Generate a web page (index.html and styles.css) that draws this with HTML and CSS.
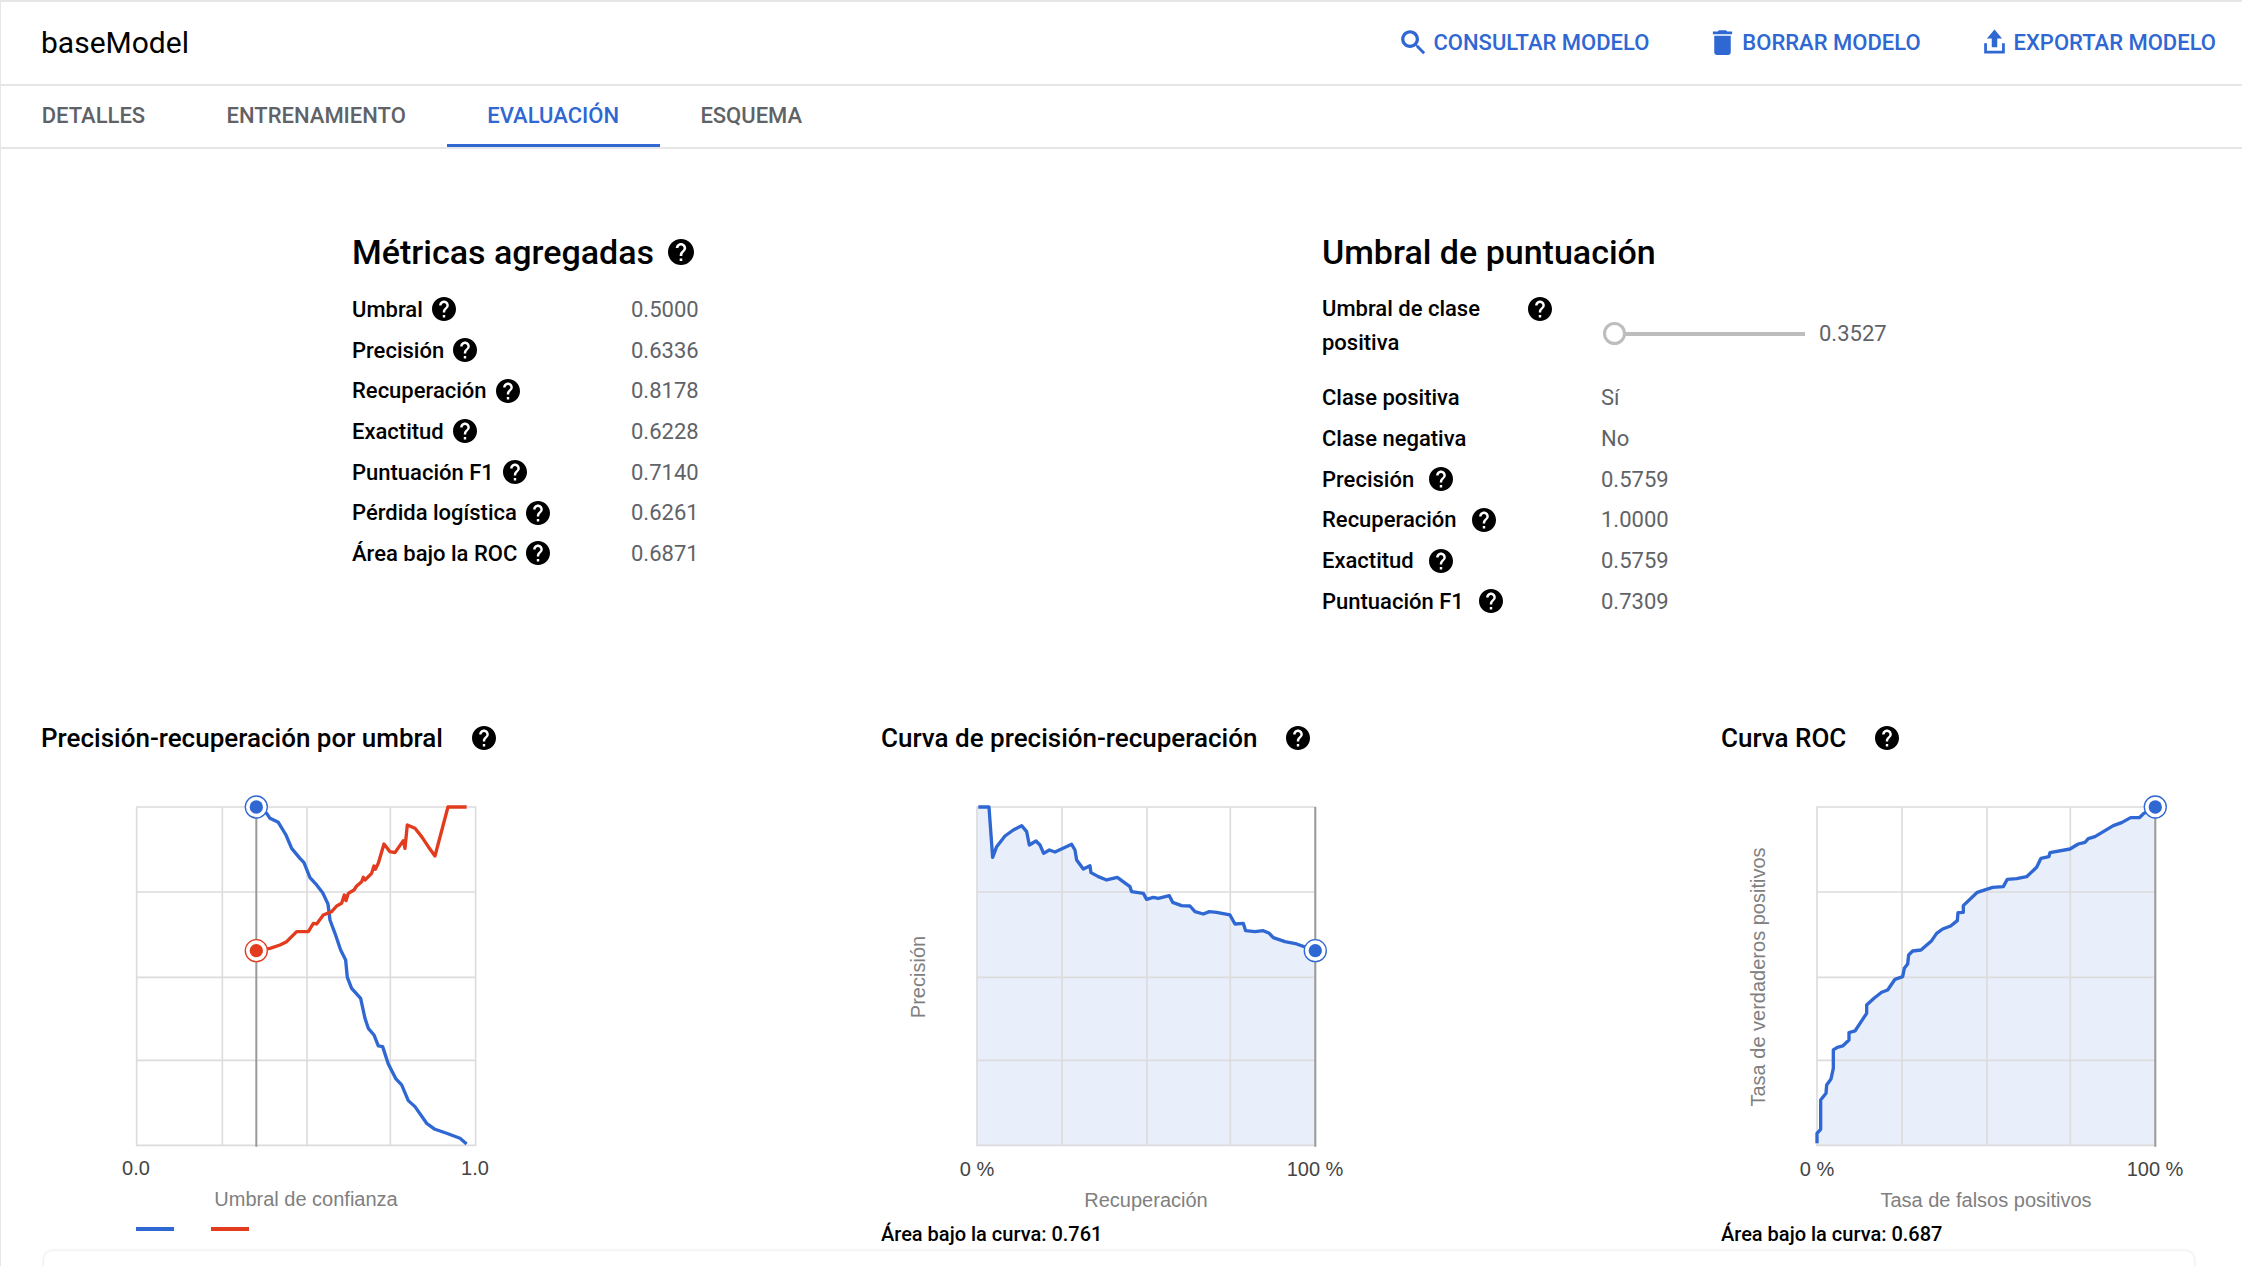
FILE: index.html
```html
<!DOCTYPE html>
<html lang="es">
<head>
    <meta charset="UTF-8">
    <title>baseModel</title>
    <link rel="stylesheet" href="styles.css">
</head>
<body>

    <svg class="defs">
        <symbol id="help" viewBox="2 2 20 20"><path d="M12 2C6.48 2 2 6.48 2 12s4.48 10 10 10 10-4.48 10-10S17.52 2 12 2zm1 17h-2v-2h2v2zm2.07-7.75l-.9.92C13.45 12.9 13 13.5 13 15h-2v-.5c0-1.1.45-2.1 1.17-2.83l1.24-1.26c.37-.36.59-.86.59-1.41 0-1.1-.9-2-2-2s-2 .9-2 2H8c0-2.21 1.79-4 4-4s4 1.79 4 4c0 .88-.36 1.68-.93 2.25z"/></symbol>
        <g id="grid">
            <path class="grid" d="M291 81H1306V1096H291ZM546 81V1096M801 81V1096M1051 81V1096M291 336H1306M291 592H1306M291 841H1306"/>
        </g>
    </svg>

    <div class="page">
        <header class="topbar">
            <h1 class="model-name">baseModel</h1>
            <div class="actions">
                <a class="action">
                    <svg viewBox="0 0 24 24"><path d="M15.500 14h-.79l-.28-.27C15.41 12.59 16 11.11 16 9.500 16 5.910 13.090 3 9.500 3S3 5.910 3 9.500 5.910 16 9.500 16c1.610 0 3.090-.59 4.230-1.570l.27.28v.79l5 4.990L20.490 19l-4.990-5zm-6-.4C7.200 13.600 5.400 11.800 5.400 9.500S7.200 5.400 9.500 5.400 13.600 7.200 13.600 9.500 11.800 13.600 9.500 13.600z"/></svg>
                    Consultar modelo
                </a>
                <a class="action">
                    <svg viewBox="0 0 24 24"><path d="M6 19c0 1.100.9 2 2 2h8c1.100 0 2-.9 2-2V7H6v12zM19 4h-3.500l-1-1h-5l-1 1H5v2h14V4z"/></svg>
                    Borrar modelo
                </a>
                <a class="action">
                    <svg viewBox="0 0 24 24"><path d="M12 2.500L6.500 9H10v6.500h4V9h3.500zM4.500 12.500V20h15v-7.500h-2V18h-11v-5.500z"/></svg>
                    Exportar modelo
                </a>
            </div>
        </header>

        <nav class="tabs">
            <a class="tab">Detalles</a>
            <a class="tab">Entrenamiento</a>
            <a class="tab active">Evaluación</a>
            <a class="tab">Esquema</a>
        </nav>

        <section class="metrics">
            <div class="metrics-col aggregate">
                <h2 class="section-title">Métricas agregadas <svg class="help big"><use href="#help"/></svg></h2>
                <div class="row"><div class="label">Umbral <svg class="help"><use href="#help"/></svg></div><div class="value">0.5000</div></div>
                <div class="row"><div class="label">Precisión <svg class="help"><use href="#help"/></svg></div><div class="value">0.6336</div></div>
                <div class="row"><div class="label">Recuperación <svg class="help"><use href="#help"/></svg></div><div class="value">0.8178</div></div>
                <div class="row"><div class="label">Exactitud <svg class="help"><use href="#help"/></svg></div><div class="value">0.6228</div></div>
                <div class="row"><div class="label">Puntuación F1 <svg class="help"><use href="#help"/></svg></div><div class="value">0.7140</div></div>
                <div class="row"><div class="label">Pérdida logística <svg class="help"><use href="#help"/></svg></div><div class="value">0.6261</div></div>
                <div class="row"><div class="label">Área bajo la ROC <svg class="help"><use href="#help"/></svg></div><div class="value">0.6871</div></div>
            </div>

            <div class="metrics-col threshold">
                <h2 class="section-title">Umbral de puntuación</h2>
                <div class="row slider-row">
                    <div class="label"><span class="wrap">Umbral de clase positiva</span><svg class="help"><use href="#help"/></svg></div>
                    <div class="value slider-value">
                        <span class="slider"><span class="thumb"></span></span>
                        0.3527
                    </div>
                </div>
                <div class="row"><div class="label">Clase positiva</div><div class="value">Sí</div></div>
                <div class="row"><div class="label">Clase negativa</div><div class="value">No</div></div>
                <div class="row"><div class="label">Precisión <svg class="help"><use href="#help"/></svg></div><div class="value">0.5759</div></div>
                <div class="row"><div class="label">Recuperación <svg class="help"><use href="#help"/></svg></div><div class="value">1.0000</div></div>
                <div class="row"><div class="label">Exactitud <svg class="help"><use href="#help"/></svg></div><div class="value">0.5759</div></div>
                <div class="row"><div class="label">Puntuación F1 <svg class="help"><use href="#help"/></svg></div><div class="value">0.7309</div></div>
            </div>
        </section>

        <section class="charts">
            <div class="chart-col">
                <h3 class="chart-title">Precisión-recuperación por umbral <svg class="help"><use href="#help"/></svg></h3>
                <svg class="chart" width="840" height="470">
                    <g transform="translate(59 0) scale(.3333)">
                        <path class="grid" d="M110 81H1127V1096H110ZM367 81V1096M621 81V1096M871 81V1096M110 336H1127M110 592H1127M110 841H1127"/>
                        <path class="cursor" d="M469 81V1100"/>
                        <polyline class="line blue" points="469,81 500,100 510,115 535,127 558,165 575,205 600,235 612,248 630,293 650,315 668,338 684,372 690,420 705,460 722,510 737,540 742,592 755,625 782,655 795,715 805,745 822,765 835,798 848,800 865,852 888,897 905,915 925,962 945,980 980,1030 1005,1048 1040,1060 1080,1075 1100,1092"/>
                        <polyline class="line red" points="469,512 510,505 540,495 560,485 590,455 625,455 640,430 650,432 670,405 695,395 710,378 725,370 733,345 738,362 745,340 762,330 770,318 785,305 790,292 795,300 815,280 822,258 826,268 835,250 852,192 870,215 885,218 910,182 915,205 922,135 945,145 965,170 985,200 1005,228 1044,81 1100,81"/>
                        <circle class="ring blue-ring" cx="469" cy="81" r="33"/>
                        <circle class="dot blue-dot" cx="469" cy="81" r="20"/>
                        <circle class="ring red-ring" cx="469" cy="512" r="33"/>
                        <circle class="dot red-dot" cx="469" cy="512" r="20"/>
                    </g>
                    <text class="tick" x="95" y="395" text-anchor="middle">0.0</text>
                    <text class="tick" x="434" y="395" text-anchor="middle">1.0</text>
                    <text class="axis-title" x="265" y="426" text-anchor="middle">Umbral de confianza</text>
                    <path class="legend blue-key" d="M95 449H133"/>
                    <path class="legend red-key" d="M170 449H208"/>
                </svg>
            </div>

            <div class="chart-col">
                <h3 class="chart-title">Curva de precisión-recuperación <svg class="help"><use href="#help"/></svg></h3>
                <svg class="chart short" width="840" height="436">
                    <g transform="translate(-1 0) scale(.3333)">
                        <polygon class="area" points="295,81 327,81 338,232 350,200 375,168 400,150 425,137 440,155 448,195 468,183 480,195 491,220 508,210 525,216 575,193 585,210 590,240 610,267 630,257 633,278 655,290 680,300 712,292 750,320 755,335 790,340 800,358 820,352 835,355 868,347 878,367 905,377 930,378 945,395 970,402 988,395 1010,397 1050,405 1065,432 1090,430 1097,452 1125,455 1150,452 1168,460 1180,473 1215,485 1250,492 1306,512 1306,1096 291,1096 291,81"/>
                        <use href="#grid"/>
                        <path class="cursor" d="M1306 81V1100"/>
                        <polyline class="line blue" points="295,81 327,81 338,232 350,200 375,168 400,150 425,137 440,155 448,195 468,183 480,195 491,220 508,210 525,216 575,193 585,210 590,240 610,267 630,257 633,278 655,290 680,300 712,292 750,320 755,335 790,340 800,358 820,352 835,355 868,347 878,367 905,377 930,378 945,395 970,402 988,395 1010,397 1050,405 1065,432 1090,430 1097,452 1125,455 1150,452 1168,460 1180,473 1215,485 1250,492 1306,512"/>
                        <circle class="ring blue-ring" cx="1306" cy="512" r="33"/>
                        <circle class="dot blue-dot" cx="1306" cy="512" r="20"/>
                    </g>
                    <text class="tick" x="96" y="396" text-anchor="middle">0 %</text>
                    <text class="tick" x="434" y="396" text-anchor="middle">100 %</text>
                    <text class="axis-title" x="265" y="427" text-anchor="middle">Recuperación</text>
                    <text class="axis-title" transform="translate(44 197) rotate(-90)" text-anchor="middle">Precisión</text>
                </svg>
                <p class="auc">Área bajo la curva: 0.761</p>
            </div>

            <div class="chart-col">
                <h3 class="chart-title">Curva ROC <svg class="help"><use href="#help"/></svg></h3>
                <svg class="chart short" width="840" height="436">
                    <g transform="translate(-1 0) scale(.3333)">
                        <polygon class="area" points="291,1090 291,1060 302,1048 302,960 318,940 320,915 333,897 340,865 340,810 352,802 368,798 387,780 387,758 405,753 420,730 440,700 440,675 462,655 485,637 503,630 525,598 548,590 553,565 563,552 566,525 578,513 603,510 635,482 650,460 668,447 692,438 712,422 714,398 730,397 730,377 772,337 818,322 850,320 862,298 890,296 920,290 950,262 963,235 987,230 990,218 1050,207 1075,192 1095,187 1105,176 1125,170 1180,137 1205,128 1232,113 1258,113 1272,100 1306,81 1306,1096 291,1096"/>
                        <use href="#grid"/>
                        <path class="cursor" d="M1306 81V1100"/>
                        <polyline class="line blue" points="291,1090 291,1060 302,1048 302,960 318,940 320,915 333,897 340,865 340,810 352,802 368,798 387,780 387,758 405,753 420,730 440,700 440,675 462,655 485,637 503,630 525,598 548,590 553,565 563,552 566,525 578,513 603,510 635,482 650,460 668,447 692,438 712,422 714,398 730,397 730,377 772,337 818,322 850,320 862,298 890,296 920,290 950,262 963,235 987,230 990,218 1050,207 1075,192 1095,187 1105,176 1125,170 1180,137 1205,128 1232,113 1258,113 1272,100 1306,81"/>
                        <circle class="ring blue-ring" cx="1306" cy="81" r="33"/>
                        <circle class="dot blue-dot" cx="1306" cy="81" r="20"/>
                    </g>
                    <text class="tick" x="96" y="396" text-anchor="middle">0 %</text>
                    <text class="tick" x="434" y="396" text-anchor="middle">100 %</text>
                    <text class="axis-title" x="265" y="427" text-anchor="middle">Tasa de falsos positivos</text>
                    <text class="axis-title" transform="translate(44 197) rotate(-90)" text-anchor="middle">Tasa de verdaderos positivos</text>
                </svg>
                <p class="auc">Área bajo la curva: 0.687</p>
            </div>
        </section>

        <div class="bottom-card"></div>
    </div>

</body>
</html>
```
FILE: styles.css
```css
/* General */
html, body {
    margin: 0;
    height: 100%;
    overflow: hidden;
    background: #fff;
}

body {
    font-family: Roboto, sans-serif;
    color: #000;
}

.defs {
    position: absolute;
    width: 0;
    height: 0;
}

.page {
    height: 1266px;
    box-sizing: border-box;
    border-top: 2px solid #e6e6e6;
    border-left: 1px solid #e6e6e6;
    overflow: hidden;
}

.help {
    width: 24px;
    height: 24px;
    fill: #000;
    flex: none;
}

/* Header */
.topbar {
    height: 82px;
    box-sizing: content-box;
    display: flex;
    align-items: center;
    justify-content: space-between;
    padding: 0 26px 0 40px;
    border-bottom: 2px solid #e6e6e6;
}

.model-name {
    margin: 0 0 2px;
    font-size: 30px;
    font-weight: 400;
}

.actions {
    display: flex;
    gap: 57px;
    margin-bottom: 2px;
}

.action {
    display: flex;
    align-items: center;
    gap: 3px;
    color: #2f67d3;
    font-size: 22px;
    font-weight: 500;
    text-transform: uppercase;
}

.action svg {
    width: 33px;
    height: 33px;
    fill: #2f67d3;
}

/* Tabs */
.tabs {
    height: 61px;
    display: flex;
    border-bottom: 2px solid #e6e6e6;
}

.tab {
    padding: 0 40.7px;
    line-height: 60px;
    font-size: 22px;
    font-weight: 500;
    color: #5f6368;
    text-transform: uppercase;
    box-sizing: border-box;
    height: 61px;
    border-bottom: 3px solid transparent;
}

.tab.active {
    color: #2f67d3;
    border-bottom-color: #2f67d3;
}

/* Metrics */
.metrics {
    display: flex;
    height: 568px;
    padding: 83px 0 0 351px;
    box-sizing: border-box;
}

.metrics-col {
    flex: none;
    width: 970px;
    font-size: 22px;
}

.section-title {
    margin: 0 0 17px;
    height: 40px;
    display: flex;
    align-items: center;
    gap: 14px;
    font-size: 34px;
    font-weight: 500;
}

.help.big {
    width: 26px;
    height: 26px;
}

.row {
    display: flex;
    height: 40.7px;
    align-items: center;
}

.label {
    display: flex;
    align-items: center;
    gap: 9px;
    width: 279px;
    font-weight: 500;
}

.value {
    color: #5f6368;
}

.threshold .label {
    gap: 15px;
}

.slider-row {
    height: 88.5px;
    line-height: 34px;
    align-items: flex-start;
}

.threshold .slider-row .label {
    align-items: flex-start;
    gap: 0;
    padding-top: 3px;
}

.slider-row .help {
    margin-top: 5px;
}

.wrap {
    width: 206px;
}

.slider-value {
    display: flex;
    align-items: center;
    gap: 14px;
    height: 90px;
}

.slider {
    position: relative;
    width: 190px;
    height: 4px;
    margin-left: 14px;
    background: #bdbdbd;
}

.thumb {
    position: absolute;
    left: -12px;
    top: -10px;
    width: 17px;
    height: 17px;
    border: 3.5px solid #bdbdbd;
    border-radius: 50%;
    background: #fff;
}

/* Charts */
.charts {
    display: flex;
    padding-left: 40px;
}

.chart-col {
    width: 840px;
    flex: none;
}

.chart-title {
    margin: 0 0 21px;
    height: 42px;
    display: flex;
    align-items: center;
    gap: 29px;
    font-size: 26px;
    font-weight: 500;
}

.chart {
    display: block;
}

.grid {
    fill: none;
    stroke: #dcdcdc;
    stroke-width: 5;
}

.cursor {
    fill: none;
    stroke: #9a9a9a;
    stroke-width: 6;
}

.line {
    fill: none;
    stroke-width: 10;
    stroke-linejoin: round;
}

.blue { stroke: #2f67d3; }
.red { stroke: #e33b1e; }

.area {
    fill: #2f67d3;
    fill-opacity: .11;
}

.ring {
    fill: #fff;
    stroke-width: 4;
}

.blue-ring { stroke: #2f67d3; }
.red-ring { stroke: #e33b1e; }
.blue-dot { fill: #2f67d3; }
.red-dot { fill: #e33b1e; }

.tick {
    font-family: "Liberation Sans", Arial, sans-serif;
    font-size: 20px;
    fill: #444;
}

.axis-title {
    font-family: "Liberation Sans", Arial, sans-serif;
    font-size: 20px;
    fill: #808080;
}

.legend {
    stroke-width: 4;
}

.blue-key { stroke: #2f67d3; }
.red-key { stroke: #e33b1e; }

.auc {
    margin: 6px 0 0;
    font-size: 20px;
    font-weight: 500;
}

/* Card cut off at the bottom */
.bottom-card {
    position: absolute;
    left: 43px;
    top: 1250px;
    width: 2152px;
    height: 60px;
    box-sizing: border-box;
    background: #fff;
    border: 1px solid #f1f1f1;
    border-radius: 10px;
    box-shadow: 0 0 3px rgba(0, 0, 0, .08);
}
```
